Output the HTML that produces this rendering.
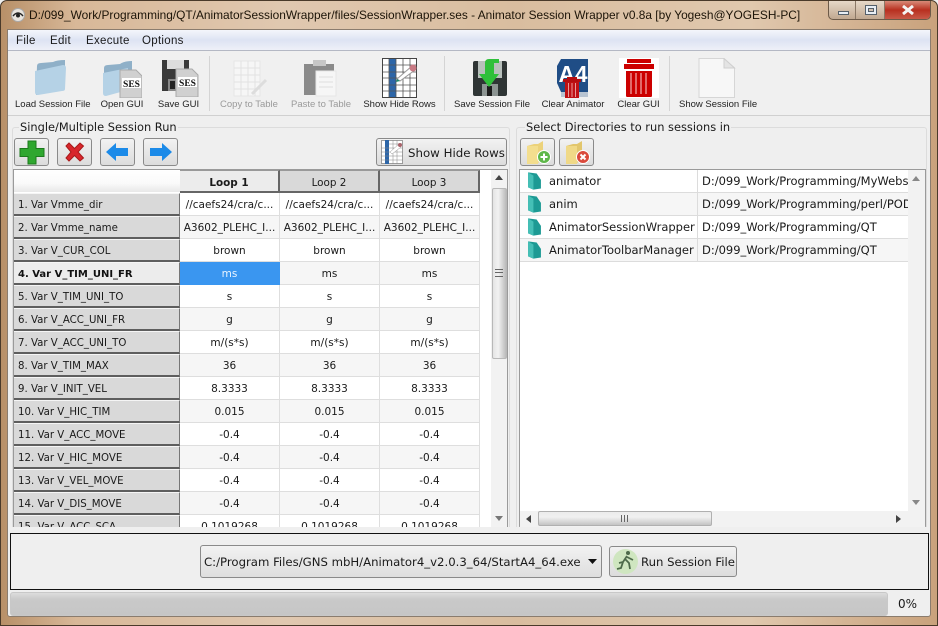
<!DOCTYPE html>
<html><head><meta charset="utf-8"><style>
html,body{margin:0;padding:0}
body{width:938px;height:626px;position:relative;overflow:hidden;background:#efefef;font-family:"DejaVu Sans","Liberation Sans",sans-serif;font-size:11px;color:#1a1a1a}
div,span,svg{position:absolute;box-sizing:border-box;white-space:nowrap}
.frame{left:0;top:0;width:938px;height:626px;border-radius:7px 7px 0 0;border:1px solid #4a3a2a;background:linear-gradient(90deg,#b89068 0,#d8b898 8%,#e0c8b0 30%,#d9bd9f 55%,#e0c8ae 80%,#c9a27c 100%)}
.tl{font-family:"Liberation Sans",sans-serif;font-size:9.5px;color:#222;text-align:center;top:99px;line-height:12px}
.dis{color:#9a9a9a}
.sep{top:56px;width:1px;height:55px;background:#d4d4d4}
.m{top:34px;font-size:11.5px;line-height:14px;font-family:"Liberation Sans",sans-serif;letter-spacing:.3px}
.btn{border:1px solid #8a8a8a;border-radius:3px;background:linear-gradient(#f2f2f2,#dcdcdc)}
.rh{left:14px;width:166px;height:23px;background:#d9d9d9;border-bottom:2px solid #5e5e5e;border-right:1px solid #777;border-top:1px solid #f5f5f5;padding-left:4px;line-height:23px;font-size:10.2px}
.c{width:100px;height:23px;border-right:1px solid #dedede;border-bottom:1px solid #dedede;text-align:center;line-height:24px;font-size:10.5px;overflow:hidden}
.c1{left:180px}.c2{left:280px}.c3{left:380px}
.g{background:#f6f6f6}.w{background:#fff}
.ch{top:170px;width:100px;height:23px;background:#d9d9d9;border-right:2px solid #666;border-bottom:2px solid #666;border-top:1px solid #999;text-align:center;line-height:24px;font-size:10.4px}
.lrow{left:520px;width:388px;height:23px;border-bottom:1px solid #dcdcdc;line-height:23px;font-size:11.5px}
.lrow span{top:0}
.n{left:29px}.p{left:182px;width:206px;overflow:hidden}
.lc{left:177px;top:0;width:1px;height:22px;background:#dcdcdc}
.fi{left:7px;top:1px}
.gt{background:#efefef;padding:0 1px;font-size:11.4px;line-height:14px;top:120px}
</style></head><body>
<div class="frame"></div>
<svg style="left:11px;top:8px" width="14" height="14" viewBox="0 0 14 14"><circle cx="7" cy="7" r="6.5" fill="#e8e4de" stroke="#aaa"/><path d="M2 8Q7 2 12 8" fill="none" stroke="#222" stroke-width="1.4"/><circle cx="7" cy="7.5" r="2" fill="#222"/></svg>
<div style="left:29px;top:7px;font-family:'Liberation Sans',sans-serif;font-size:11.9px;line-height:16px;color:#1c1408">D:/099_Work/Programming/QT/AnimatorSessionWrapper/files/SessionWrapper.ses - Animator Session Wrapper v0.8a [by Yogesh@YOGESH-PC]</div>
<div style="left:828px;top:1px;width:103px;height:19px;border:1px solid #6c5a48;border-top:none;border-radius:0 0 5px 5px;background:linear-gradient(#e6d8c8,#c0a890);overflow:hidden">
<div style="left:56px;top:0;width:47px;height:18px;background:linear-gradient(#d88a78,#b83020 50%,#c85a48)"></div>
<div style="left:26px;top:0;width:1px;height:18px;background:#8a7866"></div>
<div style="left:55px;top:0;width:1px;height:18px;background:#8a7866"></div>
<div style="left:9px;top:10px;width:11px;height:4px;background:#e8eef4;border:1px solid #55606a"></div>
<div style="left:36px;top:4px;width:12px;height:10px;background:#e8eef4;border:1px solid #55606a"></div>
<div style="left:39px;top:7px;width:6px;height:4px;background:#d2c0ae;border:1px solid #55606a"></div>
</div>
<svg style="left:902px;top:5px" width="12" height="10" viewBox="0 0 12 10"><path d="M1 1L11 9M11 1L1 9" stroke="#f4f4f4" stroke-width="3"/></svg>

<div style="left:7px;top:29px;width:924px;height:588px;background:#efefef;border:1px solid #8a7c6e;border-radius:0 0 3px 3px"></div>
<!-- menu -->
<div style="left:8px;top:30px;width:922px;height:21px;background:linear-gradient(#f4f6fb,#dde3f3 50%,#eef0f8);border-bottom:1px solid #b4b8c4"></div>
<div class="m" style="left:16px">File</div><div class="m" style="left:50px">Edit</div><div class="m" style="left:86px">Execute</div><div class="m" style="left:142px">Options</div>
<!-- toolbar -->
<div style="left:8px;top:51px;width:922px;height:65px;background:#f0f0f0;border-bottom:1px solid #d0d0d0"></div>

<svg style="left:33px;top:59px" width="36" height="38" viewBox="0 0 36 38"><path d="M4 7Q4 4 8 4L20 3Q24 1 32 1V30L3 36Z" fill="#8fb0c8"/><path d="M2 12L30 6Q33 6 33 9L32 30Q32 32 29 32L5 36Q2 36 2 33Z" fill="#b5d2e6"/></svg>
<svg style="left:102px;top:60px" width="40" height="38" viewBox="0 0 40 38"><path d="M2 8Q2 5 6 5L18 4Q22 1 30 1V28L2 35Z" fill="#8fb0c8"/><path d="M1 13L26 8V30L4 36Q1 36 1 33Z" fill="#b5d2e6"/><path d="M18 10H34L40 16V38H18Z" fill="#d0d0d0" stroke="#aaa"/><rect x="20" y="18" width="19" height="10" fill="#fff"/><text x="29.5" y="27" font-family="Liberation Serif" font-weight="bold" font-size="9.5" text-anchor="middle" fill="#111">SES</text></svg>
<svg style="left:161px;top:59px" width="38" height="38" viewBox="0 0 38 38"><path d="M1 1H28V32H1Z" fill="#3a3a3a"/><rect x="6" y="1" width="17" height="9" fill="#ddd"/><rect x="7" y="20" width="15" height="12" fill="#888"/><rect x="9" y="22" width="5" height="8" fill="#222"/><path d="M15 10H31L37 16V38H15Z" fill="#d0d0d0" stroke="#aaa"/><rect x="17" y="18" width="19" height="10" fill="#fff"/><text x="26.5" y="27" font-family="Liberation Serif" font-weight="bold" font-size="9.5" text-anchor="middle" fill="#111">SES</text></svg>
<svg style="left:232px;top:60px" width="38" height="38" viewBox="0 0 38 38"><path d="M2 1H28V36H2Z" fill="#f6f6f6" stroke="#e6e6e6"/><path d="M2 8H28M2 15H28M2 22H28M2 29H28M9 1V36M16 1V36M23 1V36" stroke="#e2e2e2"/><path d="M20 34L34 20" stroke="#ddd" stroke-width="3"/></svg>
<svg style="left:303px;top:59px" width="36" height="38" viewBox="0 0 36 38"><rect x="1" y="5" width="30" height="31" fill="#8a8a8a"/><rect x="10" y="1" width="13" height="6" fill="#c6c6c6"/><path d="M13 12H33V37H13Z" fill="#f6f6f6" stroke="#e6e6e6"/><path d="M16 18H30M16 23H30M16 28H30" stroke="#ddd"/></svg>
<svg style="left:382px;top:58px" width="36" height="40" viewBox="0 0 36 40"><rect x=".5" y=".5" width="34" height="39" fill="#fff" stroke="#444"/><rect x="7" y="1" width="7" height="38" fill="#2d66a8"/><path d="M7 1V39M14 1V39M21 1V39M28 1V39M1 7H34M1 14H34M1 20H34M1 27H34M1 33H34" stroke="#555" stroke-width=".8" fill="none"/><path d="M15 21L30 8L33 12L18 23Z" fill="#fff" stroke="#999"/><circle cx="31" cy="10" r="3.5" fill="#c87a84"/><path d="M15 21L18 23L14 24Z" fill="#1c8a6a"/></svg>
<svg style="left:472px;top:58px" width="36" height="38" viewBox="0 0 36 38"><rect x="1" y="3" width="34" height="35" rx="2" fill="#2f3535"/><rect x="6" y="3" width="24" height="17" fill="#b8c0bc"/><rect x="10" y="26" width="16" height="12" fill="#8c9492"/><rect x="15" y="28" width="5" height="10" fill="#1c1c1c"/><path d="M17 1H27V5H22V16H27L17 29L7 16H13V5Q13 1 17 1Z" fill="#2fc03a"/></svg>
<svg style="left:556px;top:58px" width="34" height="40" viewBox="0 0 34 40"><path d="M5 1H32V34H5L1 25V8Z" fill="#1f4d86"/><path d="M1 25L5 34V39H32V34H5Z" fill="#b8c4d2"/><text x="17" y="24" font-family="Liberation Sans" font-weight="bold" font-size="23" text-anchor="middle" fill="#fff" textLength="29" lengthAdjust="spacingAndGlyphs">A4</text><rect x="7" y="21" width="18" height="3" fill="#b40d10"/><rect x="11" y="19" width="10" height="2" fill="#b40d10"/><path d="M9 24H23V40H9Z" fill="#c01014"/><path d="M12.500 25V39M16 25V39M19.500 25V39" stroke="#e89a9a"/></svg>
<svg style="left:619px;top:58px" width="40" height="40" viewBox="0 0 40 40"><rect width="40" height="40" fill="#fff"/><rect x="8" y="1" width="24" height="4" fill="#c00"/><rect x="5" y="6" width="30" height="5" fill="#c00"/><path d="M7 13H33V38Q33 39 31 39H9Q7 39 7 38Z" fill="#c00"/><path d="M12 15V36M17 15V36M22 15V36M27 15V36" stroke="#f0b0b0" stroke-width="1.2"/></svg>
<svg style="left:698px;top:58px" width="38" height="40" viewBox="0 0 38 40"><path d="M1 .5H26L36.500 10V39.500H1Z" fill="#f7f7f7" stroke="#d6d6d6"/><path d="M26 .5V10H36.500Z" fill="#e4e4e4" stroke="#cfcfcf"/></svg>

<div class="tl" style="left:15px;width:73px">Load Session File</div>
<div class="tl" style="left:100px;width:44px">Open GUI</div>
<div class="tl" style="left:157px;width:43px">Save GUI</div>
<div class="tl dis" style="left:219px;width:60px">Copy to Table</div>
<div class="tl dis" style="left:291px;width:60px">Paste to Table</div>
<div class="tl" style="left:363px;width:73px">Show Hide Rows</div>
<div class="tl" style="left:454px;width:75px">Save Session File</div>
<div class="tl" style="left:541px;width:64px">Clear Animator</div>
<div class="tl" style="left:617px;width:43px">Clear GUI</div>
<div class="tl" style="left:679px;width:77px">Show Session File</div>
<div class="sep" style="left:209px"></div><div class="sep" style="left:444px"></div><div class="sep" style="left:669px"></div>

<!-- groups -->
<div style="left:12px;top:127px;width:498px;height:403px;border:1px solid #dcdcdc;border-radius:3px"></div>
<div style="left:516px;top:127px;width:411px;height:403px;border:1px solid #dcdcdc;border-radius:3px"></div>
<div class="gt" style="left:19px">Single/Multiple Session Run</div>
<div class="gt" style="left:525px">Select Directories to run sessions in</div>

<div class="btn" style="left:14px;top:138px;width:35px;height:28px"></div>
<svg style="left:19px;top:140px" width="26" height="25" viewBox="0 0 26 25"><path d="M9 1H17V8.500H25V16.500H17V24H9V16.500H1V8.500H9Z" fill="#2fa72f" stroke="#1c7a1c"/></svg>
<div class="btn" style="left:57px;top:138px;width:35px;height:28px"></div>
<svg style="left:64px;top:142px" width="21" height="20" viewBox="0 0 21 20"><path d="M2 4L5 1L10.500 6.500L16 1L19.500 4L14 10L19.500 16L16 19L10.500 13.500L5 19L2 16L7 10Z" fill="#d8262c" stroke="#a81a1a"/></svg>
<div class="btn" style="left:100px;top:138px;width:35px;height:28px"></div>
<svg style="left:105px;top:142px" width="24" height="20" viewBox="0 0 24 20"><path d="M1 10L11 1V6H23V14H11V19Z" fill="#1b8ae8"/></svg>
<div class="btn" style="left:143px;top:138px;width:35px;height:28px"></div>
<svg style="left:149px;top:142px" width="24" height="20" viewBox="0 0 24 20"><path d="M23 10L13 1V6H1V14H13V19Z" fill="#1b8ae8"/></svg>
<div class="btn" style="left:376px;top:138px;width:131px;height:28px"></div>
<svg style="left:381px;top:140px" width="22" height="24" viewBox="0 0 22 24"><rect x=".5" y=".5" width="21" height="23" fill="#fff" stroke="#666" stroke-width=".6"/><rect x="4" y="0" width="4" height="24" fill="#2d66a8"/><path d="M8 4H22M0 8H22M0 12H22M0 16H22M0 20H22M12 0V24M16 0V24" stroke="#888" stroke-width=".5"/><path d="M9 12L18 4L20 7L11 14Z" fill="#fff" stroke="#999" stroke-width=".5"/><circle cx="19" cy="5" r="2" fill="#a8626a"/></svg>
<div style="left:408px;top:146px;font-size:11.8px;line-height:15px">Show Hide Rows</div>
<div class="btn" style="left:520px;top:138px;width:35px;height:28px"></div>
<svg style="left:526px;top:140px" width="26" height="25" viewBox="0 0 26 25"><path d="M1 6L8 4H12L17 1V22L1 24Z" fill="#ecd27a"/><path d="M1 6L12 6V24H1Z" fill="#f3de8e"/><circle cx="18" cy="17" r="6.500" fill="#5fb74a" stroke="#fff"/><path d="M18 13.500V20.500M14.500 17H21.500" stroke="#fff" stroke-width="2"/></svg>
<div class="btn" style="left:559px;top:138px;width:35px;height:28px"></div>
<svg style="left:565px;top:140px" width="26" height="25" viewBox="0 0 26 25"><path d="M1 6L8 4H12L17 1V22L1 24Z" fill="#e2c66c"/><path d="M1 6L12 6V24H1Z" fill="#f0d987"/><circle cx="18" cy="17" r="6.500" fill="#da4a3c" stroke="#fff"/><path d="M15.500 14.500L20.500 19.500M20.500 14.500L15.500 19.500" stroke="#fff" stroke-width="2"/></svg>

<!-- table -->
<div style="left:13px;top:169px;width:495px;height:358px;background:#fff;border:1px solid #9a9a9a;border-bottom:none"></div>
<div style="left:14px;top:170px;width:166px;height:22px;background:linear-gradient(#fff,#fafafa 60%,#e8e8e8)"></div>
<div class="ch" style="left:180px;background:#ececec;font-weight:bold">Loop 1</div>
<div class="ch" style="left:280px">Loop 2</div>
<div class="ch" style="left:380px">Loop 3</div>
<div class="rh" style="top:193px">1. Var Vmme_dir</div><div class="c c1 w" style="top:193px">//caefs24/cra/c...</div><div class="c c2 w" style="top:193px">//caefs24/cra/c...</div><div class="c c3 w" style="top:193px">//caefs24/cra/c...</div>
<div class="rh" style="top:216px">2. Var Vmme_name</div><div class="c c1 g" style="top:216px">A3602_PLEHC_I...</div><div class="c c2 g" style="top:216px">A3602_PLEHC_I...</div><div class="c c3 g" style="top:216px">A3602_PLEHC_I...</div>
<div class="rh" style="top:239px">3. Var V_CUR_COL</div><div class="c c1 w" style="top:239px">brown</div><div class="c c2 w" style="top:239px">brown</div><div class="c c3 w" style="top:239px">brown</div>
<div class="rh" style="top:262px;font-weight:bold;background:#ececec;font-size:10px;color:#111">4. Var V_TIM_UNI_FR</div><div class="c c1" style="top:262px;background:#3a96f0;color:#eaf4ff;border-color:#3a96f0">ms</div><div class="c c2 g" style="top:262px">ms</div><div class="c c3 g" style="top:262px">ms</div>
<div class="rh" style="top:285px">5. Var V_TIM_UNI_TO</div><div class="c c1 w" style="top:285px">s</div><div class="c c2 w" style="top:285px">s</div><div class="c c3 w" style="top:285px">s</div>
<div class="rh" style="top:308px">6. Var V_ACC_UNI_FR</div><div class="c c1 g" style="top:308px">g</div><div class="c c2 g" style="top:308px">g</div><div class="c c3 g" style="top:308px">g</div>
<div class="rh" style="top:331px">7. Var V_ACC_UNI_TO</div><div class="c c1 w" style="top:331px">m/(s*s)</div><div class="c c2 w" style="top:331px">m/(s*s)</div><div class="c c3 w" style="top:331px">m/(s*s)</div>
<div class="rh" style="top:354px">8. Var V_TIM_MAX</div><div class="c c1 g" style="top:354px">36</div><div class="c c2 g" style="top:354px">36</div><div class="c c3 g" style="top:354px">36</div>
<div class="rh" style="top:377px">9. Var V_INIT_VEL</div><div class="c c1 w" style="top:377px">8.3333</div><div class="c c2 w" style="top:377px">8.3333</div><div class="c c3 w" style="top:377px">8.3333</div>
<div class="rh" style="top:400px">10. Var V_HIC_TIM</div><div class="c c1 g" style="top:400px">0.015</div><div class="c c2 g" style="top:400px">0.015</div><div class="c c3 g" style="top:400px">0.015</div>
<div class="rh" style="top:423px">11. Var V_ACC_MOVE</div><div class="c c1 w" style="top:423px">-0.4</div><div class="c c2 w" style="top:423px">-0.4</div><div class="c c3 w" style="top:423px">-0.4</div>
<div class="rh" style="top:446px">12. Var V_HIC_MOVE</div><div class="c c1 g" style="top:446px">-0.4</div><div class="c c2 g" style="top:446px">-0.4</div><div class="c c3 g" style="top:446px">-0.4</div>
<div class="rh" style="top:469px">13. Var V_VEL_MOVE</div><div class="c c1 w" style="top:469px">-0.4</div><div class="c c2 w" style="top:469px">-0.4</div><div class="c c3 w" style="top:469px">-0.4</div>
<div class="rh" style="top:492px">14. Var V_DIS_MOVE</div><div class="c c1 g" style="top:492px">-0.4</div><div class="c c2 g" style="top:492px">-0.4</div><div class="c c3 g" style="top:492px">-0.4</div>
<div class="rh" style="top:515px">15. Var V_ACC_SCA</div><div class="c c1 w" style="top:515px">0.1019268</div><div class="c c2 w" style="top:515px">0.1019268</div><div class="c c3 w" style="top:515px">0.1019268</div>
<div style="left:8px;top:527px;width:922px;height:6px;background:#efefef"></div>
<!-- v scroll -->
<div style="left:491px;top:170px;width:16px;height:357px;background:#f2f2f2"></div>
<svg style="left:495px;top:175px" width="8" height="5"><path d="M0 5L4 0L8 5Z" fill="#444"/></svg>
<svg style="left:495px;top:516px" width="8" height="5"><path d="M0 0L4 5L8 0Z" fill="#777"/></svg>
<div style="left:492px;top:188px;width:15px;height:171px;border:1px solid #b8b8b8;border-radius:2px;background:linear-gradient(90deg,#e4e4e4,#f2f2f2 40%,#bbb)"></div>
<div style="left:495px;top:269px;width:8px;height:8px;border-top:1px solid #666;border-bottom:1px solid #666"></div>
<div style="left:495px;top:272px;width:8px;height:1px;background:#666"></div>

<!-- list -->
<div style="left:519px;top:169px;width:407px;height:358px;background:#fff;border:1px solid #9a9a9a;border-bottom:1px solid #aaa"></div>
<div class="lrow" style="top:170px;background:#fff"><span class="n">animator</span><div class="lc"></div><span class="p">D:/099_Work/Programming/MyWebsite</span><svg class="fi" width="15" height="20" viewBox="0 0 14 18"><path d="M1 1L9 2L13 8V16L6 17L1 15Z" fill="#1d9a94"/><path d="M1 1L6 4V17L1 15Z" fill="#45bfb6"/></svg></div>
<div class="lrow" style="top:193px;background:#f6f6f6"><span class="n">anim</span><div class="lc"></div><span class="p">D:/099_Work/Programming/perl/POD</span><svg class="fi" width="15" height="20" viewBox="0 0 14 18"><path d="M1 1L9 2L13 8V16L6 17L1 15Z" fill="#1d9a94"/><path d="M1 1L6 4V17L1 15Z" fill="#45bfb6"/></svg></div>
<div class="lrow" style="top:216px;background:#fff"><span class="n">AnimatorSessionWrapper</span><div class="lc"></div><span class="p">D:/099_Work/Programming/QT</span><svg class="fi" width="15" height="20" viewBox="0 0 14 18"><path d="M1 1L9 2L13 8V16L6 17L1 15Z" fill="#1d9a94"/><path d="M1 1L6 4V17L1 15Z" fill="#45bfb6"/></svg></div>
<div class="lrow" style="top:239px;background:#f6f6f6"><span class="n">AnimatorToolbarManager</span><div class="lc"></div><span class="p">D:/099_Work/Programming/QT</span><svg class="fi" width="15" height="20" viewBox="0 0 14 18"><path d="M1 1L9 2L13 8V16L6 17L1 15Z" fill="#1d9a94"/><path d="M1 1L6 4V17L1 15Z" fill="#45bfb6"/></svg></div>
<div style="left:908px;top:170px;width:17px;height:342px;background:#f2f2f2"></div>
<svg style="left:912px;top:176px" width="8" height="5"><path d="M0 5L4 0L8 5Z" fill="#888"/></svg>
<svg style="left:912px;top:500px" width="8" height="5"><path d="M0 0L4 5L8 0Z" fill="#888"/></svg>
<div style="left:520px;top:511px;width:405px;height:16px;background:#f2f2f2"></div>
<svg style="left:526px;top:515px" width="5" height="8"><path d="M5 0L0 4L5 8Z" fill="#444"/></svg>
<svg style="left:896px;top:515px" width="5" height="8"><path d="M0 0L5 4L0 8Z" fill="#444"/></svg>
<div style="left:538px;top:511px;width:174px;height:15px;border:1px solid #b0b0b0;border-radius:2px;background:linear-gradient(#ececec,#f0f0f0 40%,#c4c4c4)"></div>
<div style="left:621px;top:515px;width:7px;height:7px;border-left:1px solid #666;border-right:1px solid #666"></div>
<div style="left:624px;top:515px;width:1px;height:7px;background:#666"></div>

<!-- bottom -->
<div style="left:10px;top:533px;width:919px;height:57px;border:1px solid #111;background:#efefef"></div>
<div style="left:200px;top:545px;width:402px;height:33px;border:1px solid #8a8a8a;border-radius:3px;background:linear-gradient(#f2f2f2,#dedede)"></div>
<div style="left:204px;top:555px;font-size:11.7px;line-height:15px">C:/Program Files/GNS mbH/Animator4_v2.0.3_64/StartA4_64.exe</div>
<svg style="left:588px;top:559px" width="9" height="5"><path d="M0 0H9L4.500 5Z" fill="#111"/></svg>
<div class="btn" style="left:609px;top:546px;width:128px;height:31px"></div>
<svg style="left:612px;top:548px" width="27" height="27" viewBox="0 0 27 27"><circle cx="13.500" cy="13.500" r="12.500" fill="#cfe6c0"/><circle cx="16" cy="5" r="2" fill="#4d6a4a"/><path d="M15 8L11 14L7 15M13 11L17 15L18 21M11 14L9 20L5 21M15 9L21 12" stroke="#4d6a4a" stroke-width="1.800" fill="none"/></svg>
<div style="left:641px;top:555px;font-size:11.7px;line-height:15px">Run Session File</div>
<div style="left:10px;top:592px;width:878px;height:24px;border:1px solid #c8c8c8;border-radius:3px;background:linear-gradient(#dcdcdc,#c9c9c9 30%,#c6c6c6)"></div>
<div style="left:898px;top:597px;font-size:12px;line-height:15px">0%</div>
</body></html>
